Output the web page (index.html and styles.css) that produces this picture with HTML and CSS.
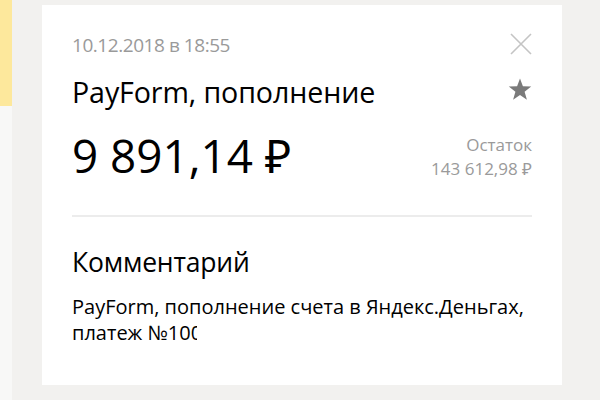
FILE: index.html
```html
<!DOCTYPE html>
<html lang="ru">
<head>
<meta charset="utf-8">
<link rel="stylesheet" href="styles.css">
</head>
<body>
<div class="page">
  <div class="side"><div class="side-mark"></div></div>
  <div class="card">
    <div class="row-top">
      <div class="date">10.12.2018 в 18:55</div>
      <svg class="close" width="22" height="22" viewBox="0 0 22 22"><path d="M1 1L21 21M21 1L1 21" stroke="#c4c4c4" stroke-width="1.6" fill="none"/></svg>
    </div>
    <div class="row-title">
      <div class="title">PayForm, пополнение</div>
      <svg class="star" width="24" height="23" viewBox="0 0 24 23"><path d="M12 0.5L14.9 8.3L23.2 8.6L16.6 13.7L18.9 21.8L12 17.1L5.1 21.8L7.4 13.7L0.8 8.6L9.1 8.3Z" fill="#7a7a7a"/></svg>
    </div>
    <div class="row-amount">
      <div class="amount">9 891,14 ₽</div>
      <div class="rest">
        <div class="rest-label">Остаток</div>
        <div class="rest-value">143 612,98 ₽</div>
      </div>
    </div>
    <div class="divider"></div>
    <div class="comment-head">Комментарий</div>
    <div class="comment">PayForm, пополнение счета в Яндекс.Деньгах,<br><span class="clip">платеж №100000</span></div>
  </div>
  <div class="right"></div>
</div>
</body>
</html>
```
FILE: styles.css
```css
html, body {
  margin: 0;
  padding: 0;
}
body {
  width: 600px;
  height: 400px;
  overflow: hidden;
  background: #f2f1ef;
  font-family: "Open Sans", "Noto Sans", sans-serif;
  color: #000;
}
.page {
  display: flex;
  height: 400px;
}
.side {
  width: 12px;
  background: #f8f8f7;
  flex: none;
}
.side-mark {
  height: 106px;
  background: #fde89c;
}
.card {
  margin: 5px 0 15px 30px;
  width: 520px;
  box-sizing: border-box;
  background: #fff;
  padding: 26px 30px 0 30px;
  flex: none;
}
.row-top {
  display: flex;
  justify-content: space-between;
  align-items: flex-start;
}
.date {
  font-size: 19px;
  color: #9a9a9a;
  line-height: 28px;
  letter-spacing: -0.45px;
}
.close {
  margin-top: 2px;
}
.row-title {
  display: flex;
  justify-content: space-between;
  align-items: center;
  margin-top: 15px;
}
.title {
  font-size: 28.6px;
  line-height: 36px;
  letter-spacing: -0.1px;
}
.star {
  margin-top: -5px;
}
.row-amount {
  display: flex;
  justify-content: space-between;
  align-items: flex-start;
  margin-top: 17px;
}
.amount {
  font-size: 45.8px;
  line-height: 56px;
  letter-spacing: 0;
}
.rest {
  text-align: right;
  margin-top: 6px;
  color: #9a9a9a;
  font-size: 17px;
  line-height: 24px;
}
.rest-value {
  letter-spacing: 0;
}
.divider {
  height: 2px;
  background: #ececec;
  margin-top: 32px;
}
.comment-head {
  font-size: 26.5px;
  line-height: 32px;
  margin-top: 29px;
  letter-spacing: -0.2px;
}
.comment {
  font-size: 20px;
  line-height: 26px;
  margin-top: 16px;
  letter-spacing: 0;
}
.clip {
  display: inline-block;
  width: 125px;
  overflow: hidden;
  white-space: nowrap;
  vertical-align: top;
}
```
